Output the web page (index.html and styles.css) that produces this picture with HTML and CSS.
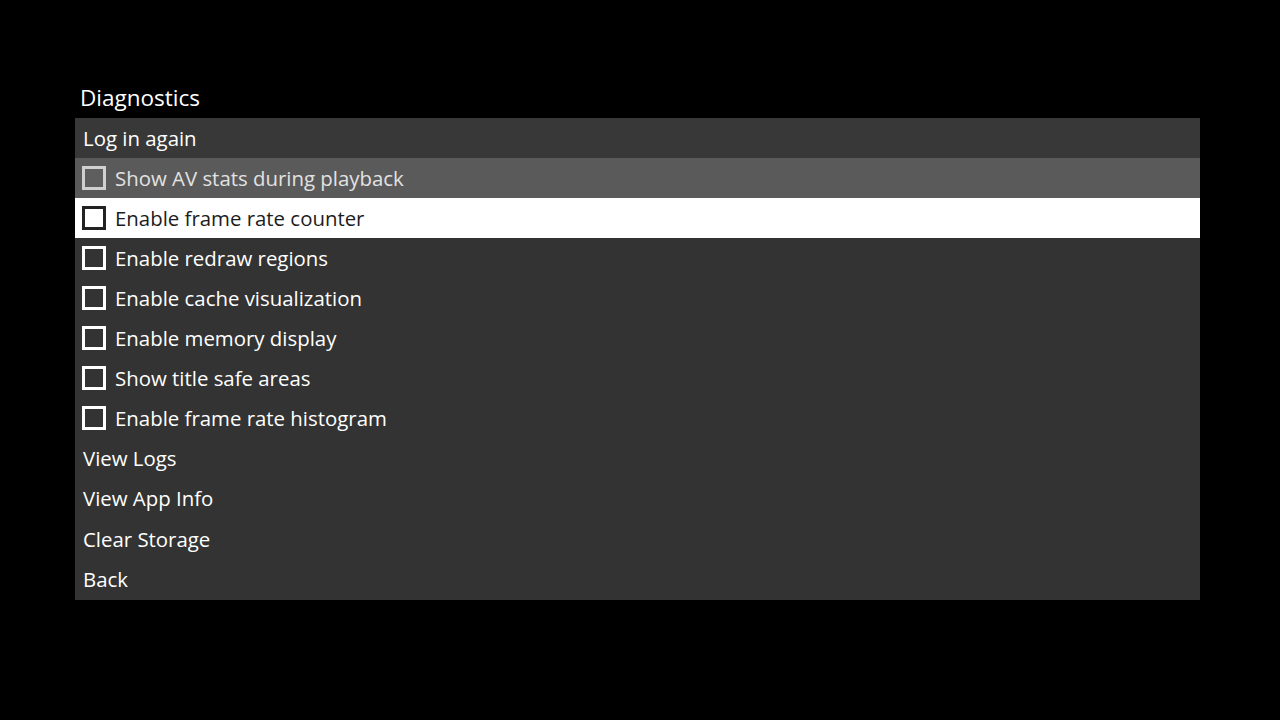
FILE: index.html
```html
<!DOCTYPE html>
<html>
<head>
<meta charset="utf-8">
<link rel="stylesheet" href="styles.css">
</head>
<body>
<div class="screen">
  <h1 class="title">Diagnostics</h1>
  <ul class="menu">
    <li class="item item-top">Log in again</li>
    <li class="item item-hover"><span class="box"></span>Show AV stats during playback</li>
    <li class="item item-focus"><span class="box"></span>Enable frame rate counter</li>
    <li class="item"><span class="box"></span>Enable redraw regions</li>
    <li class="item"><span class="box"></span>Enable cache visualization</li>
    <li class="item"><span class="box"></span>Enable memory display</li>
    <li class="item"><span class="box"></span>Show title safe areas</li>
    <li class="item"><span class="box"></span>Enable frame rate histogram</li>
    <li class="item link">View Logs</li>
    <li class="item link">View App Info</li>
    <li class="item link">Clear Storage</li>
    <li class="item link">Back</li>
  </ul>
</div>
</body>
</html>
```
FILE: styles.css
```css
html, body {
  margin: 0;
  padding: 0;
  background: #000;
  width: 1280px;
  height: 720px;
  overflow: hidden;
}
.screen {
  padding: 82px 80px 0 75px;
  font-family: "Open Sans", "Noto Sans", sans-serif;
  color: #fff;
}
.title {
  margin: 0 0 0 5px;
  font-size: 22.5px;
  font-weight: 500;
  line-height: 32px;
  height: 36px;
}
.menu {
  list-style: none;
  margin: 0;
  padding: 0;
  background: #333333;
  width: 1125px;
}
.item {
  display: flex;
  align-items: center;
  height: 40px;
  padding-left: 7px;
  padding-bottom: 1px;
  font-size: 20.4px;
  font-weight: 500;
  color: #fff;
  box-sizing: border-box;
}
.item.link {
  height: 40.5px;
  padding-left: 8px;
}
.item-top {
  background: #383838;
  padding-left: 8px;
}
.item-hover {
  background: #5a5a5a;
  color: #e2e2e2;
}
.item-focus {
  background: #fff;
  color: #1c1c1c;
}
.box {
  width: 24px;
  height: 24px;
  box-sizing: border-box;
  border: 3px solid #fff;
  margin-right: 9px;
  flex: none;
}
.item-hover .box {
  border-color: #d0d0d0;
  background: #5e5e5e;
}
.item-focus .box {
  border-color: #222;
}
```
